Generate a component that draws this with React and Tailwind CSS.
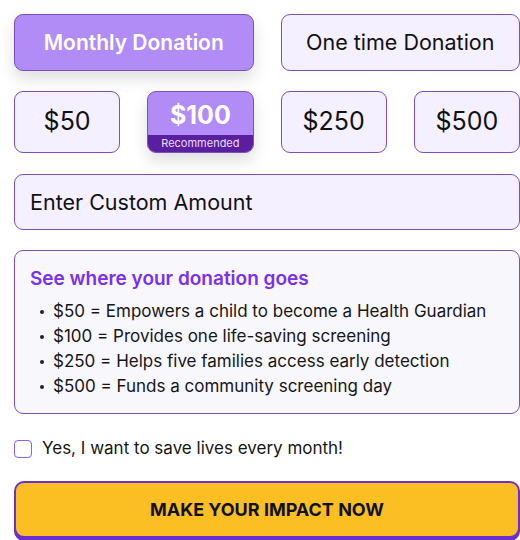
import React, { useState } from "react";

const amounts = ["$50", "$100", "$250", "$500"];

const impacts = [
  "$50 = Empowers a child to become a Health Guardian",
  "$100 = Provides one life-saving screening",
  "$250 = Helps five families access early detection",
  "$500 = Funds a community screening day",
];

const App = () => {
  const [mode, setMode] = useState("monthly");
  const [amount, setAmount] = useState("$100");
  const [monthly, setMonthly] = useState(false);

  const baseBox =
    "rounded-[9px] border border-[#7a4fbf] flex items-center justify-center";
  const idleBox = "bg-[#f5f0ff] text-[#111]";
  const activeBox =
    "bg-[#b18cf6] text-white font-semibold shadow-[0_8px_16px_rgba(0,0,0,0.13)]";

  return (
    <div
      className="w-[520px] h-[540px] bg-white overflow-hidden pl-[14px] pt-[14px]"
      style={{ fontFamily: "Inter, 'Open Sans', sans-serif" }}
    >
      {/* Frequency toggle */}
      <div className="grid grid-cols-2 gap-[27px]">
        <button
          onClick={() => setMode("monthly")}
          className={`${baseBox} h-[57px] text-[21px] ${
            mode === "monthly" ? activeBox : idleBox
          }`}
        >
          Monthly Donation
        </button>
        <button
          onClick={() => setMode("once")}
          className={`${baseBox} h-[57px] text-[21.5px] ${
            mode === "once" ? activeBox : idleBox
          }`}
        >
          One time Donation
        </button>
      </div>

      {/* Amounts */}
      <div className="grid grid-cols-4 gap-[27px] mt-[20px]">
        {amounts.map((a) => (
          <button
            key={a}
            onClick={() => setAmount(a)}
            className={`${baseBox} relative h-[62px] overflow-hidden text-[25px] ${
              amount === a ? activeBox + " flex-col" : idleBox
            }`}
          >
            {amount === a ? (
              <>
                <span className="flex-1 flex items-center font-bold leading-none pt-[3px]">
                  {a}
                </span>
                <span className="w-full h-[17px] bg-[#5a1f9e] text-[11px] font-normal leading-[17px] text-[#e9ddff]">
                  Recommended
                </span>
              </>
            ) : (
              a
            )}
          </button>
        ))}
      </div>

      {/* Custom amount */}
      <div className="mt-[21px] h-[56px] rounded-[9px] border border-[#7a4fbf] bg-[#f5f0ff] flex items-center px-[15px] text-[21.5px] text-[#111]">
        Enter Custom Amount
      </div>

      {/* Impact */}
      <div className="mt-[20px] h-[164px] rounded-[9px] border border-[#7a4fbf] bg-[#f8f7fc] pl-[15px] pt-[15px]">
        <h3 className="text-[19px] font-semibold text-[#7b2ff0] leading-[26px]">
          See where your donation goes
        </h3>
        <ul className="mt-[7px] pl-[10px]">
          {impacts.map((t) => (
            <li
              key={t}
              className="flex items-center gap-[9px] text-[17px] leading-[25px] text-[#161616]"
            >
              <span className="w-[4px] h-[4px] rounded-full bg-[#222]" />
              {t}
            </li>
          ))}
        </ul>
      </div>

      {/* Checkbox */}
      <label className="mt-[22px] flex items-center gap-[10px] text-[17px] leading-[25px] text-[#161616] cursor-pointer">
        <input
          type="checkbox"
          checked={monthly}
          onChange={() => setMonthly(!monthly)}
          className="appearance-none w-[18px] h-[18px] rounded-[4px] border-[1.5px] border-[#8b5cf6] bg-white"
        />
        Yes, I want to save lives every month!
      </label>

      {/* CTA */}
      <button className="mt-[20px] w-[506px] h-[57px] rounded-[10px] border-2 border-[#6b2fd0] bg-[#fbbf24] shadow-[0_3px_0_#6b2fd0] text-[18px] font-bold text-[#111] uppercase">
        Make your impact now
      </button>
    </div>
  );
};

export default App;
